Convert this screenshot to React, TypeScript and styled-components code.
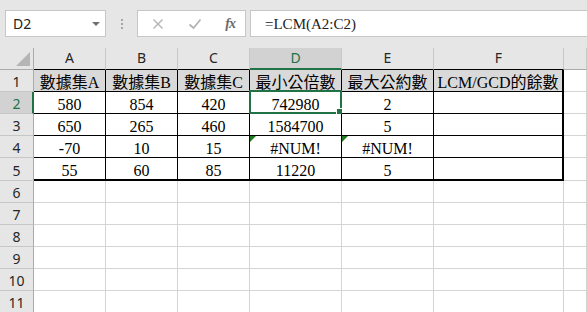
import React from "react";
import styled, { createGlobalStyle, css } from "styled-components";

const GlobalStyle = createGlobalStyle`
  html, body { margin: 0; padding: 0; background: #ffffff; }
  body { overflow: hidden; }
`;

const GREEN = "#217346";

const Shell = styled.div`
  width: 587px;
  height: 312px;
  overflow: hidden;
  display: flex;
  flex-direction: column;
  background: #ffffff;
`;

const FormulaBar = styled.div`
  flex: 0 0 48px;
  height: 48px;
  box-sizing: border-box;
  background: #e6e6e6;
  display: flex;
  align-items: flex-start;
  padding: 10px 0 0 5px;
`;

const NameBox = styled.div`
  width: 101px;
  height: 27px;
  box-sizing: border-box;
  background: #ffffff;
  border: 1px solid #c6c6c6;
  display: flex;
  align-items: center;
  justify-content: space-between;
  padding: 0 5px 0 7px;
  font-family: "Noto Sans", "Open Sans", sans-serif;
  font-size: 14px;
  color: #222;
`;

const DropArrow = styled.span`
  width: 0;
  height: 0;
  border-left: 4px solid transparent;
  border-right: 4px solid transparent;
  border-top: 4px solid #707070;
  margin-top: 1px;
`;

const Grip = styled.div`
  width: 31px;
  height: 27px;
  display: flex;
  flex-direction: column;
  align-items: center;
  justify-content: center;
  gap: 2px;
`;

const GripDot = styled.span`
  width: 2px;
  height: 2px;
  background: #a6a6a6;
`;

const IconBox = styled.div`
  width: 109px;
  height: 27px;
  box-sizing: border-box;
  background: #ffffff;
  border: 1px solid #c6c6c6;
  display: flex;
  align-items: center;
  padding: 0 10px 0 14px;
  justify-content: space-between;
`;

const FxText = styled.span`
  font-family: "Liberation Serif", serif;
  font-style: italic;
  font-weight: bold;
  font-size: 14px;
  color: #6a6a6a;
  letter-spacing: -1px;
`;

const FormulaInput = styled.div`
  flex: 1;
  margin-left: 4px;
  height: 27px;
  box-sizing: border-box;
  background: #ffffff;
  border: 1px solid #c6c6c6;
  border-right: none;
  display: flex;
  align-items: center;
  padding: 1px 0 0 14px;
  font-family: "Liberation Serif", serif;
  font-size: 15px;
  color: #222;
`;

const Sheet = styled.div`
  flex: 1;
  display: grid;
  grid-template-columns: 34px 72px 72px 72px 92px 92px 130px 1fr;
  grid-template-rows: 22px 22px 22px 22px 22px 23px 22px 22px 22px 22px 22px 22px;
  font-family: "Liberation Serif", "Noto Sans CJK TC", serif;
`;

const Corner = styled.div`
  box-sizing: border-box;
  background: #e6e6e6;
  border-right: 1px solid #ababab;
  border-bottom: 1px solid #ababab;
  display: flex;
  align-items: flex-end;
  justify-content: flex-end;
  padding: 0 3px 3px 0;
`;

const CornerTriangle = styled.span`
  width: 0;
  height: 0;
  border-left: 14px solid transparent;
  border-bottom: 14px solid #b5b5b5;
`;

const ColHeader = styled.div<{ $active?: boolean; $table?: boolean }>`
  box-sizing: border-box;
  background: ${(p) => (p.$active ? "#d2d2d2" : "#e6e6e6")};
  border-right: 1px solid #c9c9c9;
  border-bottom: ${(p) =>
    p.$active ? `2px solid ${GREEN}` : p.$table ? "1px solid #000" : "1px solid #ababab"};
  font-family: "Noto Sans", "Open Sans", sans-serif;
  font-size: 14px;
  line-height: 18px;
  padding-top: 1px;
  text-align: center;
  color: ${(p) => (p.$active ? GREEN : "#262626")};
`;

const RowHeader = styled.div<{ $active?: boolean; $tall?: boolean }>`
  box-sizing: border-box;
  background: ${(p) => (p.$active ? "#d2d2d2" : "#e6e6e6")};
  border-right: ${(p) => (p.$active ? `2px solid ${GREEN}` : "1px solid #ababab")};
  border-bottom: 1px solid #c6c6c6;
  font-family: "Noto Sans", "Open Sans", sans-serif;
  font-size: 14px;
  line-height: 20px;
  padding-top: ${(p) => (p.$tall ? 3 : 2)}px;
  padding-left: ${(p) => (p.$active ? 1 : 0)}px;
  text-align: center;
  color: ${(p) => (p.$active ? GREEN : "#262626")};
`;

const Cell = styled.div<{
  $table?: boolean;
  $head?: boolean;
  $thickRight?: boolean;
  $thickBottom?: boolean;
}>`
  position: relative;
  box-sizing: border-box;
  border-right: 1px solid #d4d4d4;
  border-bottom: 1px solid #d4d4d4;
  background: #ffffff;
  font-size: 16px;
  line-height: 20px;
  padding-top: 3px;
  text-align: center;
  white-space: nowrap;
  color: #000;
  ${(p) =>
    p.$table &&
    css`
      border-right: ${p.$thickRight ? 2 : 1}px solid #000;
      border-bottom: ${p.$thickBottom ? 2 : 1}px solid #000;
    `}
  ${(p) =>
    p.$head &&
    css`
      background: #d9d9d9;
    `}
`;

const Selection = styled.div`
  position: absolute;
  top: -2px;
  left: -1px;
  right: -1px;
  bottom: -1px;
  border: 2px solid ${GREEN};
  pointer-events: none;
`;

const FillHandle = styled.div`
  position: absolute;
  right: -3px;
  bottom: -3px;
  width: 5px;
  height: 5px;
  background: ${GREEN};
  border: 1px solid #ffffff;
`;

const ErrorMark = styled.span`
  position: absolute;
  top: 0;
  left: 0;
  width: 0;
  height: 0;
  border-top: 6px solid #1f7a1f;
  border-right: 6px solid transparent;
`;

const XIcon = () => (
  <svg width="12" height="12" viewBox="0 0 12 12">
    <path d="M1.5 1.5 L10.5 10.5 M10.5 1.5 L1.5 10.5" stroke="#b3b3b3" strokeWidth="1.4" fill="none" />
  </svg>
);

const CheckIcon = () => (
  <svg width="14" height="12" viewBox="0 0 14 12">
    <path d="M1.5 6.5 L5.5 10 L12.5 1.5" stroke="#b3b3b3" strokeWidth="1.8" fill="none" />
  </svg>
);

const columns = ["A", "B", "C", "D", "E", "F", ""];

const data: string[][] = [
  ["數據集A", "數據集B", "數據集C", "最小公倍數", "最大公約數", "LCM/GCD的餘數"],
  ["580", "854", "420", "742980", "2", ""],
  ["650", "265", "460", "1584700", "5", ""],
  ["-70", "10", "15", "#NUM!", "#NUM!", ""],
  ["55", "60", "85", "11220", "5", ""],
];

const errorCells = new Set(["3-3", "3-4"]);

export default function App() {
  const rows: React.ReactNode[] = [];
  for (let r = 0; r < 11; r++) {
    const rowNum = r + 1;
    rows.push(
      <RowHeader key={`rh${r}`} $active={rowNum === 2} $tall={rowNum === 5}>
        {rowNum}
      </RowHeader>
    );
    for (let c = 0; c < 7; c++) {
      const inTable = r < 5 && c < 6;
      const value = inTable ? data[r][c] : "";
      rows.push(
        <Cell
          key={`c${r}-${c}`}
          $table={inTable}
          $head={inTable && r === 0}
          $thickRight={inTable && c === 5}
          $thickBottom={inTable && r === 4}
        >
          {errorCells.has(`${r}-${c}`) && <ErrorMark />}
          {value}
          {r === 1 && c === 3 && (
            <Selection>
              <FillHandle />
            </Selection>
          )}
        </Cell>
      );
    }
  }

  return (
    <>
      <GlobalStyle />
      <Shell>
        <FormulaBar>
          <NameBox>
            <span>D2</span>
            <DropArrow />
          </NameBox>
          <Grip>
            <GripDot />
            <GripDot />
            <GripDot />
          </Grip>
          <IconBox>
            <XIcon />
            <CheckIcon />
            <FxText>fx</FxText>
          </IconBox>
          <FormulaInput>=LCM(A2:C2)</FormulaInput>
        </FormulaBar>
        <Sheet>
          <Corner>
            <CornerTriangle />
          </Corner>
          {columns.map((col, i) => (
            <ColHeader key={`h${i}`} $active={col === "D"} $table={i < 6}>
              {col}
            </ColHeader>
          ))}
          {rows}
        </Sheet>
      </Shell>
    </>
  );
}
